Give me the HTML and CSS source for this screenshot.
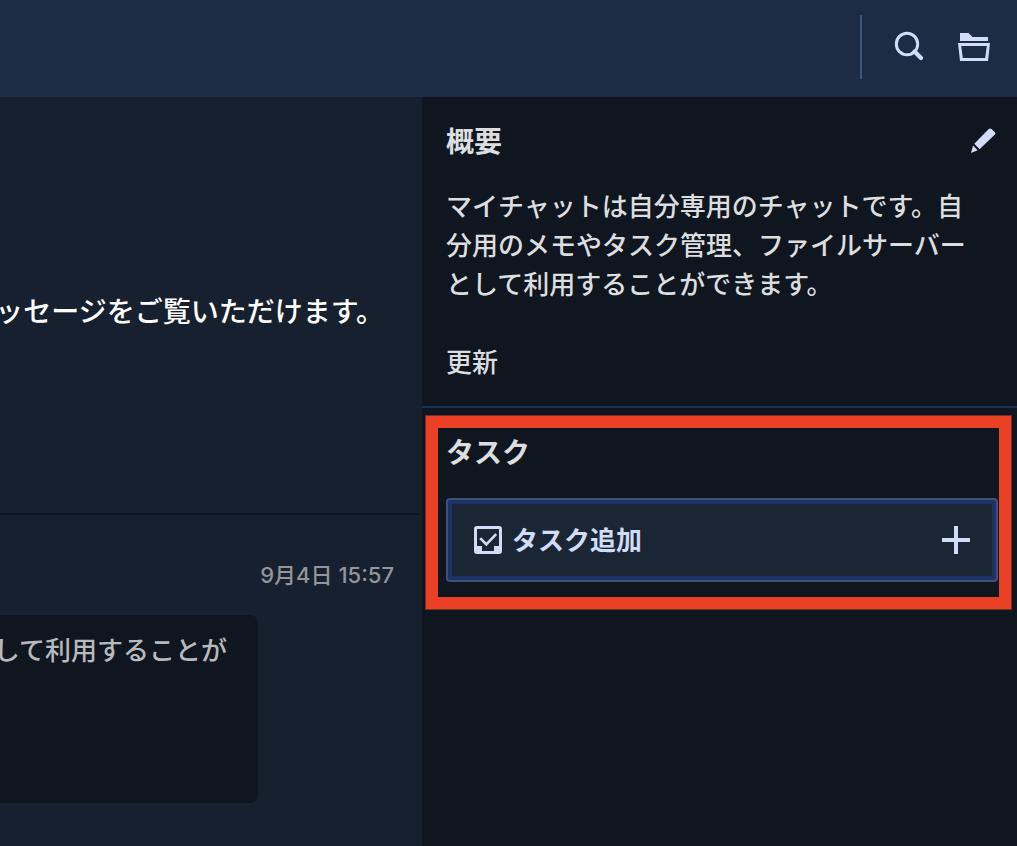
FILE: index.html
```html
<!DOCTYPE html>
<html lang="ja">
<head>
<meta charset="utf-8">
<title>マイチャット</title>
<link rel="stylesheet" href="styles.css">
</head>
<body>
<header class="topbar">
  <div class="topbar-tools">
    <button class="icon-button" type="button" aria-label="検索">
      <svg width="32" height="32" viewBox="0 0 32 32" fill="none" stroke="currentColor"><circle cx="13" cy="13" r="10.7" stroke-width="3"/><path d="M20.500 20.500L27 27" stroke-width="4.200" stroke-linecap="round"/></svg>
    </button>
    <button class="icon-button" type="button" aria-label="ファイル">
      <svg width="32" height="32" viewBox="0 0 32 32" fill="currentColor"><path d="M2 2h8.500l4 4H30v4H2z"/><path fill-rule="evenodd" d="M0 12h32l-2 18H2zM3.200 15l1.600 12h22.400l1.600-12z"/></svg>
    </button>
  </div>
</header>
<div class="workspace">
  <main class="timeline">
    <p class="notice">ッセージをご覧いただけます。</p>
    <article class="message">
      <time class="message-time">9月4日 15:57</time>
      <p class="bubble">して利用することが</p>
    </article>
  </main>
  <aside class="sidebar">
    <section class="overview">
      <div class="section-head">
        <h2 class="section-title">概要</h2>
        <button class="icon-button" type="button" aria-label="概要を編集">
          <svg width="26" height="26" viewBox="0 0 26 26" fill="currentColor"><path d="M3.300 16.800L17.500 2.300Q19 .8 20.500 2.100L23.900 5.300Q25 6.300 23.900 7.500L8.600 22.200zM2 18.500L6.700 23.300L0 26z"/></svg>
        </button>
      </div>
      <p class="description">マイチャットは自分専用のチャットです。自<br>分用のメモやタスク管理、ファイルサーバー<br>として利用することができます。<br><br>更新</p>
    </section>
    <section class="tasks">
      <h2 class="section-title">タスク</h2>
      <button class="add-task" type="button">
        <svg width="28" height="28" viewBox="0 0 28 28" fill="currentColor"><path fill-rule="evenodd" d="M3 0h22q3 0 3 3v22q0 3-3 3H3q-3 0-3-3V3q0-3 3-3zM3 3v17h5v5h12v-5h5V3z"/><path d="M6.200 12.200L12.300 18.300L22.200 8.200" fill="none" stroke="currentColor" stroke-width="2.600"/></svg>
        <span class="add-label">タスク追加</span>
        <svg width="28" height="28" viewBox="0 0 28 28" fill="currentColor"><path d="M12 0h4v12h12v4H16v12h-4V16H0v-4h12z"/></svg>
      </button>
      <div class="highlight"></div>
    </section>
  </aside>
</div>
</body>
</html>
```
FILE: styles.css
```css
* {
  box-sizing: border-box;
}

body {
  display: flex;
  flex-direction: column;
  min-height: 100vh;
  margin: 0;
  background: #17202e;
  color: #dcdddf;
  font-family: "Noto Sans CJK JP", sans-serif;
  font-size: 26px;
  font-weight: 500;
  line-height: 39px;
}

h2,
p {
  margin: 0;
}

button {
  font: inherit;
  cursor: pointer;
}

svg {
  display: block;
  flex: none;
}

.topbar {
  display: flex;
  justify-content: flex-end;
  padding: 15px 27px 18px;
  background: #1e2b45;
}

.topbar-tools {
  display: flex;
  align-items: center;
  gap: 32px;
  height: 64px;
  padding-left: 32px;
  border-left: 2px solid #3e5478;
}

.icon-button {
  padding: 0;
  border: 0;
  background: none;
  color: #d1dcf8;
}

.workspace {
  display: flex;
  flex: 1;
}

.timeline {
  flex: 1;
  min-width: 0;
  overflow: hidden;
}

.notice {
  display: flex;
  justify-content: flex-end;
  padding: 194px 36px 183px 0;
  margin-right: 2px;
  border-bottom: 2px solid #0f161f;
  color: #fff;
  font-size: 28px;
  white-space: nowrap;
}

.message {
  display: flex;
  flex-direction: column;
  gap: 20px;
  padding: 40px 28px 43px 0;
}

.message-time {
  color: #92969c;
  font-family: Inter, "Noto Sans CJK JP", sans-serif;
  font-size: 22px;
  line-height: 40px;
  text-align: right;
}

.bubble {
  display: flex;
  justify-content: flex-end;
  min-height: 188px;
  margin-right: 136px;
  padding: 14px 31px;
  border-radius: 0 8px 8px 0;
  background: #0f1620;
  color: #b7b9bc;
  white-space: nowrap;
}

.sidebar {
  flex: 0 0 595px;
  background: #0f1620;
}

.overview {
  padding: 23px 20px 26px 24px;
  border-bottom: 2px solid #1d2f52;
}

.section-head {
  display: flex;
  align-items: center;
  justify-content: space-between;
  margin-bottom: 25px;
}

.section-title {
  font-size: 28px;
  font-weight: 700;
  line-height: 40px;
}

.tasks {
  position: relative;
  padding: 23px 19px 28px 24px;
}

.add-task {
  display: flex;
  align-items: center;
  gap: 10px;
  width: 100%;
  height: 84px;
  margin-top: 27px;
  padding: 0 26px;
  border: 2px solid #3f5273;
  border-radius: 4px;
  background: #1b2635;
  box-shadow: inset 0 0 0 4px #1d3268;
  color: #d1dcf8;
  font-weight: 700;
}

.add-label {
  flex: 1;
  padding-bottom: 4px;
  text-align: left;
}

.highlight {
  position: absolute;
  inset: 8px 6px 1px 4px;
  border: 12px solid #ea4126;
  box-shadow: 0 0 0 1px #7a2c23;
  pointer-events: none;
}
```
